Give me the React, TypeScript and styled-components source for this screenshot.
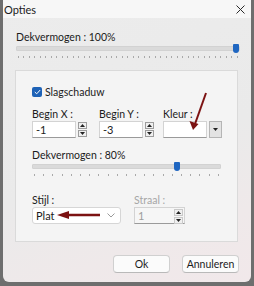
import React from 'react'
import styled, { createGlobalStyle } from 'styled-components'

const GlobalStyle = createGlobalStyle`
    html, body {
        margin: 0;
        padding: 0;
    }
    body {
        background: #6e6e6e;
        font-family: Lato, 'Noto Sans', sans-serif;
        font-size: 10.5px;
        color: #1b1b1b;
    }
`

const Window = styled.div`
    position: relative;
    width: 248px;
    height: 282px;
    margin-left: 3px;
    display: flex;
    flex-direction: column;
    overflow: hidden;
    border-radius: 0 0 6px 6px;
    background: linear-gradient(160deg, #ececec 0%, #eaeaea 55%, #efe9ea 80%, #f1e8ea 100%);
`

const TitleBar = styled.div`
    height: 18px;
    display: flex;
    align-items: center;
    justify-content: space-between;
    padding: 0 6px 0 1px;
    background: #f7f7f7;
    font-size: 11px;
`

const Body = styled.div`
    display: flex;
    flex-direction: column;
    padding: 0 11px 0 13px;
`

const Label = styled.div<{ $top?: number; $disabled?: boolean }>`
    line-height: 14px;
    height: 14px;
    margin-top: ${(p) => p.$top ?? 0}px;
    color: ${(p) => (p.$disabled ? '#a6a6a6' : '#1b1b1b')};
    white-space: nowrap;
`

const SliderWrap = styled.div`
    position: relative;
    display: flex;
    flex-direction: column;
    padding-top: 2px;
`

const Track = styled.div`
    height: 5px;
    background: #dadada;
    border: 1px solid #d2d2d2;
    box-sizing: border-box;
    border-radius: 1px;
`

const Thumb = styled.div`
    position: absolute;
    top: 0;
    width: 6px;
    height: 9px;
    background: #1f66c1;
    border-radius: 1px 1px 3px 3px;
`

const Ticks = styled.div`
    display: flex;
    justify-content: space-between;
    margin-top: 5px;
    padding: 0 2px;
`

const Tick = styled.span`
    width: 1px;
    height: 2px;
    background: #a9a9a9;
`

const Group = styled.div`
    margin: 12px 2px 0 -1px;
    padding: 16px 16px 17px 16px;
    border: 1px solid #dadada;
    background: #f4f4f4;
    display: flex;
    flex-direction: column;
`

const CheckRow = styled.div`
    display: flex;
    align-items: center;
    gap: 3px;
    height: 10px;
    line-height: 10px;
`

const CheckBox = styled.span`
    width: 10px;
    height: 10px;
    border-radius: 2px;
    background: #1e62b6;
    display: flex;
    align-items: center;
    justify-content: center;
`

const FieldGrid = styled.div<{ $cols: string; $top: number }>`
    display: grid;
    grid-template-columns: ${(p) => p.$cols};
    margin-top: ${(p) => p.$top}px;
`

const Field = styled.div`
    display: flex;
    flex-direction: column;
`

const ControlRow = styled.div`
    display: flex;
    align-items: flex-start;
    gap: 2px;
`

const TextBox = styled.div<{ $w: number; $disabled?: boolean }>`
    width: ${(p) => p.$w}px;
    height: 17px;
    box-sizing: border-box;
    border: 1px solid #d3d3d3;
    border-bottom-color: #9a9a9a;
    background: ${(p) => (p.$disabled ? '#f6f6f6' : '#ffffff')};
    color: ${(p) => (p.$disabled ? '#9d9d9d' : '#1b1b1b')};
    display: flex;
    align-items: center;
    justify-content: space-between;
    padding: 0 1px 0 3px;
    line-height: 15px;
    font-size: 11px;
`

const Spinner = styled.div`
    display: flex;
    flex-direction: column;
    gap: 1px;
    padding-top: 1px;
`

const SpinButton = styled.span<{ $light?: boolean }>`
    width: 9px;
    height: 7px;
    box-sizing: border-box;
    border: 1px solid ${(p) => (p.$light ? '#c9c9c9' : '#9c9c9c')};
    background: #f0f0f0;
    display: flex;
    align-items: center;
    justify-content: center;
`

const DropButton = styled.span`
    width: 13px;
    height: 17px;
    box-sizing: border-box;
    border: 1px solid #b5b5b5;
    background: #e3e3e3;
    display: flex;
    align-items: center;
    justify-content: center;
`

const Select = styled.div`
    width: 89px;
    height: 17px;
    box-sizing: border-box;
    border: 1px solid #d6d6d6;
    border-radius: 3px;
    background: #ffffff;
    display: flex;
    align-items: center;
    justify-content: space-between;
    padding: 0 5px 0 3px;
    font-size: 11px;
`

const Buttons = styled.div`
    display: flex;
    justify-content: flex-end;
    gap: 12px;
    margin: 13px 1px 0 0;
`

const Button = styled.div`
    width: 57px;
    height: 18px;
    box-sizing: border-box;
    border: 1px solid #d0d0d0;
    border-bottom-color: #b9b9b9;
    border-radius: 4px;
    background: #fbfbfb;
    display: flex;
    align-items: center;
    justify-content: center;
`

const Overlay = styled.svg`
    position: absolute;
    left: 0;
    top: 0;
    pointer-events: none;
`

const Tri = ({ up }: { up?: boolean }) => (
    <svg width="5" height="3" viewBox="0 0 5 3">
        <path d={up ? 'M0 3 L2.5 0 L5 3 Z' : 'M0 0 L5 0 L2.5 3 Z'} fill="#222" />
    </svg>
)

const Slider = ({ value, ticks }: { value: number; ticks: number }) => (
    <SliderWrap>
        <Track />
        <Thumb style={{ left: `calc((100% - 8px) * ${value / 100} + 1px)` }} />
        <Ticks>
            {Array.from({ length: ticks }).map((_, i) => (
                <Tick key={i} />
            ))}
        </Ticks>
    </SliderWrap>
)

const Spin = ({ light }: { light?: boolean }) => (
    <Spinner>
        <SpinButton $light={light}>
            <Tri up />
        </SpinButton>
        <SpinButton $light={light}>
            <Tri />
        </SpinButton>
    </Spinner>
)

const App = () => {
    return (
        <>
            <GlobalStyle />
            <Window>
                <TitleBar>
                    <span>Opties</span>
                    <svg width="9" height="9" viewBox="0 0 9 9">
                        <path d="M0.5 0.5 L8.5 8.5 M8.5 0.5 L0.5 8.5" stroke="#2a2a2a" strokeWidth="1" />
                    </svg>
                </TitleBar>
                <Body>
                    <Label $top={12}>Dekvermogen : 100%</Label>
                    <Slider value={100} ticks={41} />
                    <Group>
                        <CheckRow>
                            <CheckBox>
                                <svg width="7" height="6" viewBox="0 0 7 6">
                                    <path d="M0.8 3 L2.7 4.8 L6.2 1" stroke="#fff" strokeWidth="1" fill="none" />
                                </svg>
                            </CheckBox>
                            <span>Slagschaduw</span>
                        </CheckRow>
                        <FieldGrid $cols="67px 64px auto" $top={10}>
                            <Field>
                                <Label>Begin X :</Label>
                                <ControlRow>
                                    <TextBox $w={44}>-1</TextBox>
                                    <Spin />
                                </ControlRow>
                            </Field>
                            <Field>
                                <Label>Begin Y :</Label>
                                <ControlRow>
                                    <TextBox $w={44}>-3</TextBox>
                                    <Spin />
                                </ControlRow>
                            </Field>
                            <Field>
                                <Label>Kleur :</Label>
                                <ControlRow>
                                    <TextBox $w={44} />
                                    <DropButton>
                                        <Tri />
                                    </DropButton>
                                </ControlRow>
                            </Field>
                        </FieldGrid>
                        <Label $top={10}>Dekvermogen : 80%</Label>
                        <Slider value={78} ticks={21} />
                        <FieldGrid $cols="102px auto" $top={17}>
                            <Field>
                                <Label>Stijl :</Label>
                                <Select>
                                    <span>Plat</span>
                                    <svg width="8" height="5" viewBox="0 0 8 5">
                                        <path d="M0.5 0.5 L4 4 L7.5 0.5" stroke="#9a9a9a" fill="none" />
                                    </svg>
                                </Select>
                            </Field>
                            <Field>
                                <Label $disabled>Straal :</Label>
                                <ControlRow>
                                    <TextBox $w={51} $disabled>
                                        <span>1</span>
                                        <Spin light />
                                    </TextBox>
                                </ControlRow>
                            </Field>
                        </FieldGrid>
                    </Group>
                    <Buttons>
                        <Button>Ok</Button>
                        <Button>Annuleren</Button>
                    </Buttons>
                </Body>
                <Overlay width="248" height="282" viewBox="0 0 248 282">
                    <path d="M203 93 L192 124" stroke="#7c1212" strokeWidth="2" />
                    <path d="M190 130 L186.5 121 L195.5 124 Z" fill="#7c1212" />
                    <path d="M97 215 L64 215" stroke="#7c1212" strokeWidth="2.5" />
                    <path d="M54 215 L66 211 L66 219 Z" fill="#7c1212" />
                </Overlay>
            </Window>
        </>
    )
}

export default App
